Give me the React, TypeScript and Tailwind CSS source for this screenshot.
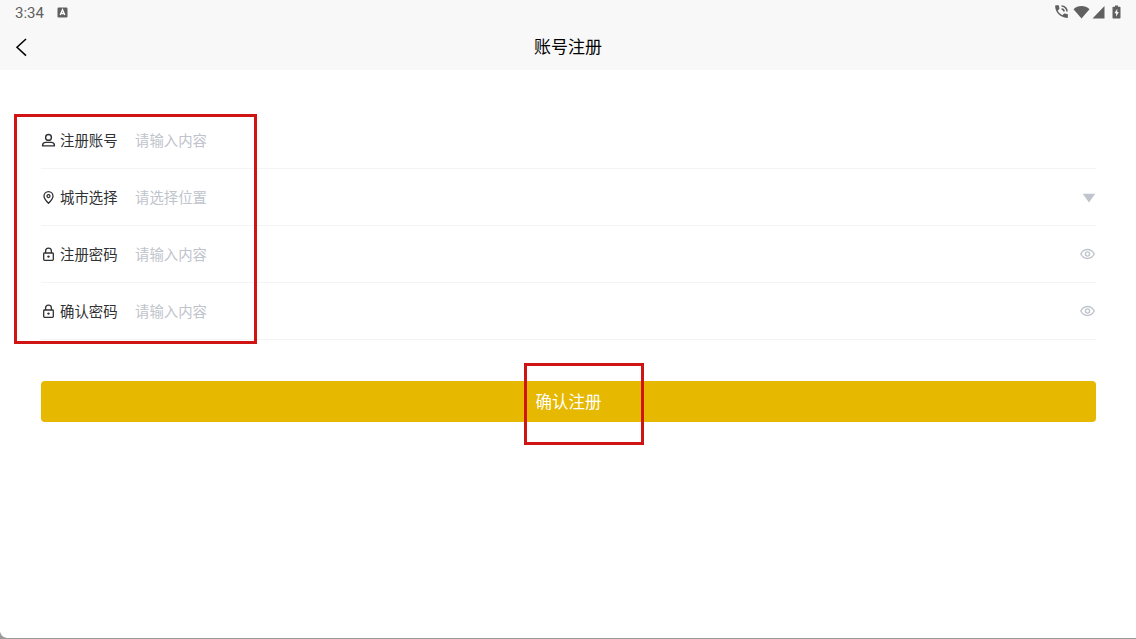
import type { ReactNode } from 'react';

type Field = {
    label: string;
    placeholder: string;
    icon: ReactNode;
    suffix?: ReactNode;
};

const UserIcon = () => (
    <svg width="15" height="16" viewBox="0 0 15 16" fill="none" stroke="#303133" strokeWidth="1.4">
        <circle cx="7.5" cy="5.4" r="2.9" />
        <path d="M1.6 13.9v-.6c0-1.7 1.400-2.900 3.200-2.900h5.400c1.800 0 3.200 1.200 3.200 2.900v.6z" strokeLinejoin="round" />
    </svg>
);

const PinIcon = () => (
    <svg width="15" height="16" viewBox="0 0 15 16" fill="none" stroke="#303133" strokeWidth="1.3">
        <path d="M7.5 14.300C5.100 11.900 3 9.800 3 7.200a4.500 4.500 0 0 1 9 0c0 2.600-2.100 4.700-4.500 7.100z" strokeLinejoin="round" />
        <circle cx="7.5" cy="7.100" r="1.500" />
    </svg>
);

const LockIcon = () => (
    <svg width="15" height="16" viewBox="0 0 15 16" fill="none" stroke="#303133" strokeWidth="1.3">
        <rect x="2.7" y="7" width="9.600" height="7.300" rx="0.8" />
        <path d="M4.600 7V5.100a2.900 2.900 0 0 1 5.800 0V7" />
        <circle cx="7.5" cy="10.600" r="1.200" fill="#303133" stroke="none" />
    </svg>
);

const EyeIcon = () => (
    <svg width="16" height="12" viewBox="0 0 16 12" fill="none" stroke="#c0c4cc" strokeWidth="1.4">
        <path d="M.8 6c1.500-2.900 3.800-4.500 6.700-4.500S12.700 3.100 14.200 6c-1.500 2.900-3.800 4.500-6.700 4.500S2.300 8.900.8 6z" strokeLinejoin="round" />
        <circle cx="7.5" cy="6" r="2.100" />
    </svg>
);

const ArrowIcon = () => (
    <svg className="mt-[2px]" width="14" height="10" viewBox="0 0 14 10" fill="#c0c4cc">
        <path d="M.7.7h12.600L7 9.500z" />
    </svg>
);

const fields: Field[] = [
    { label: '注册账号', placeholder: '请输入内容', icon: <UserIcon /> },
    { label: '城市选择', placeholder: '请选择位置', icon: <PinIcon />, suffix: <ArrowIcon /> },
    { label: '注册密码', placeholder: '请输入内容', icon: <LockIcon />, suffix: <EyeIcon /> },
    { label: '确认密码', placeholder: '请输入内容', icon: <LockIcon />, suffix: <EyeIcon /> },
];

function StatusBar() {
    return (
        <div className="flex h-[25px] items-center justify-between pr-[15px] pl-[15px] text-[#606060]">
            <div className="flex items-center gap-[13px]">
                <span className="w-[29px] pt-[2px] font-[Roboto] text-[15px] leading-none">3:34</span>
                <svg width="11" height="11" viewBox="0 0 11 11">
                    <rect x="0.5" y="0.5" width="10" height="10" rx="1.2" fill="#606060" />
                    <path d="M3.200 8 5.500 2.700 7.800 8M4 6.500h3" fill="none" stroke="#fff" strokeWidth="1.3" />
                </svg>
            </div>
            <div className="flex items-center pb-[2px]">
                <svg className="mr-[3px]" width="17" height="17" viewBox="0 0 24 24" fill="currentColor">
                    <path d="M20 15.500c-1.250 0-2.450-.2-3.570-.570a1 1 0 0 0-1.020.240l-2.200 2.200a15.100 15.100 0 0 1-6.590-6.580l2.200-2.210c.280-.270.360-.660.250-1.010A11.400 11.400 0 0 1 8.500 4c0-.550-.450-1-1-1H4c-.550 0-1 .450-1 1 0 9.390 7.610 17 17 17 .550 0 1-.450 1-1v-3.500c0-.550-.450-1-1-1z" />
                    <path d="M12 4.200A7.800 7.800 0 0 1 19.800 12M12 8.500a3.500 3.500 0 0 1 3.500 3.500" fill="none" stroke="currentColor" strokeWidth="2.200" />
                </svg>
                <svg className="mr-[2px]" width="17" height="14" viewBox="0 0 17 14" fill="currentColor">
                    <path d="M.5 4.200C2.700 2.200 5.400 1 8.500 1s5.800 1.200 8 3.200l-8 9.200z" />
                </svg>
                <svg className="mr-[7px]" width="13" height="14" viewBox="0 0 13 14" fill="currentColor">
                    <path d="M12.500 1v12.500H.5z" />
                </svg>
                <svg width="9" height="14" viewBox="0 0 9 14">
                    <path d="M3 .5h3v1.300h1.800q.7 0 .7.700v10.300q0 .7-.7.700H1.200q-.7 0-.7-.7V2.500q0-.7.7-.7H3z" fill="currentColor" />
                    <path d="M5.300 3.700 2.400 8.200h1.700v3.600l2.700-4.700H5.200z" fill="#f8f8f8" />
                </svg>
            </div>
        </div>
    );
}

function FormRow({ label, placeholder, icon, suffix }: Field) {
    return (
        <div className="flex h-[57px] items-center border-b border-[#f4f4f5] text-[14.4px]">
            {icon}
            <span className="ml-[4px] w-[75px] text-[#303133]">{label}</span>
            <span className="flex-1 text-[#c0c4cc]">{placeholder}</span>
            {suffix}
        </div>
    );
}

export default function App() {
    return (
        <main className="relative flex h-[639px] w-full flex-col overflow-hidden border-b border-[#999] bg-white font-['Noto_Sans_CJK_SC',sans-serif]">
            <header className="h-[70px] bg-[#f8f8f8]">
                <StatusBar />
                <div className="grid h-[44px] grid-cols-3 items-center">
                    <svg className="ml-[14px]" width="14" height="20" viewBox="0 0 14 20" fill="none" stroke="#000" strokeWidth="1.5">
                        <path d="M12 2 3 10.300l9 8.300" />
                    </svg>
                    <h1 className="pb-[2px] text-center text-[17px] text-black">账号注册</h1>
                </div>
            </header>

            <section className="mt-[42px] pr-[40px] pl-[41px]">
                {fields.map((field) => (
                    <FormRow key={field.label} {...field} />
                ))}
                <button className="mt-[41px] flex h-[41px] w-full items-center justify-center rounded-[4px] bg-[#e6b800] text-[16.5px] text-white">
                    确认注册
                </button>
            </section>

            {/* highlight boxes */}
            <div className="absolute top-[114px] left-[14px] h-[230px] w-[243px] border-3 border-[#d01414]" />
            <div className="absolute top-[363px] left-[524px] h-[82px] w-[120px] border-3 border-[#d01414]" />

            <svg className="absolute bottom-0 left-0" width="8" height="8" viewBox="0 0 8 8" fill="#999">
                <path d="M0 1.500Q1 7 7 8H0z" />
            </svg>
        </main>
    );
}
